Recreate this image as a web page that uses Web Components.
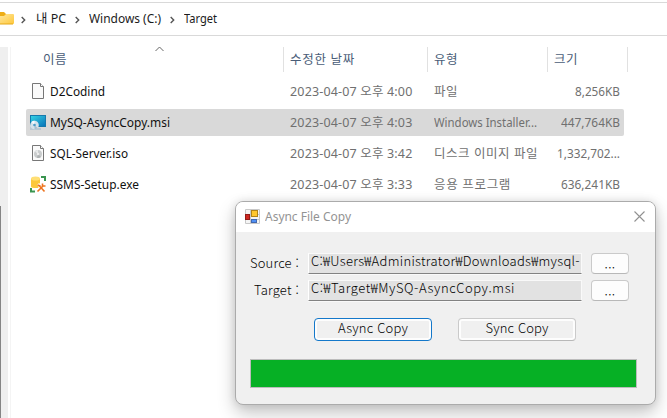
<!DOCTYPE html>
<html lang="ko"><head><meta charset="utf-8"><title>Target</title>
<style>html,body{margin:0;width:667px;height:418px;overflow:hidden;background:#fff}</style></head>
<body><file-explorer></file-explorer>
<script>
const define=(name,html,init)=>customElements.define(name,class extends HTMLElement{
 connectedCallback(){ if(this.shadowRoot)return; const r=this.attachShadow({mode:'open'}); r.innerHTML=typeof html==='function'?html(this):html; if(init)init(this,r);}
});
// A single line of text scaled horizontally to fill the width "w".
define('fit-text',el=>`<style>:host{display:block;white-space:pre;width:${el.getAttribute('w')}px;flex:none;line-height:18px;height:18px}span{display:inline-block;transform-origin:0 50%}</style><span></span>`,(el,r)=>{
 const s=r.querySelector('span'); s.textContent=el.getAttribute('text');
 const w=+el.getAttribute('w'),n=s.textContent.length,nat=s.getBoundingClientRect().width;
 if(w>nat) s.style.letterSpacing=((w-nat)/n)+'px';
 else s.style.transform=`scaleX(${w/nat})`;
});
define('file-icon',el=>{
 const page='<path d="M2.500 .5h8l3 3v12h-11z" fill="#fafafa" stroke="#777"/><path d="M10.500 .5v3h3" fill="#fff" stroke="#777"/>';
 const art={
 file:page,
 iso:page+'<circle cx="8" cy="9" r="4" fill="#c9cccd"/><path d="M8 9L5 6.500A4 4 0 0 1 8 5z" fill="#e8eaea"/><path d="M8 9l3 3a4 4 0 0 1-4 .8z" fill="#aeb2b3"/><circle cx="8" cy="9" r="1.200" fill="#eee"/>',
 msi:'<defs><linearGradient id="g" x2="1" y2="1"><stop stop-color="#35d5e5"/><stop offset="1" stop-color="#0871b8"/></linearGradient></defs><rect x=".5" y="1.500" width="15" height="11" fill="url(#g)" stroke="#1679ac"/><path d="M0 11v5h11v-2H8z" fill="#b9c8d2"/><circle cx="4.500" cy="11" r="4.300" fill="#d4e2eb"/><path d="M4.500 11L1.500 8a4.300 4.300 0 0 1 3-1.300z" fill="#f5faff"/><path d="M4.500 11l3 3a4.300 4.300 0 0 1-3 1.300z" fill="#a5bfd0"/><circle cx="4.500" cy="11" r="1.300" fill="#4c9cc5"/>',
 exe:'<path d="M11 1h4v4M1 12v3.500h4" fill="none" stroke="#3a9550" stroke-width="2"/><path d="M1 2.500v8c0 2 9 2 9 0v-8z" fill="#fcc83c"/><ellipse cx="5.500" cy="2.500" rx="4.500" ry="2" fill="#ffdf75"/><path d="M7 15l7-7M8 8l7 7" stroke="#fff" stroke-width="3"/><path d="M7.500 15.500l6-6M9 9.500l5.500 6M7.500 9l3 1M12.500 7.500v2.500h3" fill="none" stroke="#ed741f" stroke-width="1.600"/>'};
 return `<style>:host{display:block;width:16px;height:17px;flex:none}svg{display:block}</style><svg width="16" height="17" viewBox="0 0 16 17">${art[el.getAttribute('kind')]}</svg>`});
define('crumb-arrow','<style>:host{display:block;width:5px;height:8px;flex:none}svg{display:block}</style><svg width="5" height="8"><path d="M.7 1l3 3-3 3" fill="none" stroke="#555" stroke-width="1.400"/></svg>');
define('path-bar',`<style>:host{box-sizing:border-box;display:flex;align-items:center;height:34px;margin-top:2px;border-top:1px solid #d9d9d9;border-bottom:1px solid #d9d9d9;color:#1b1b1b}
 svg{display:block;flex:none;width:14px;margin-right:7px;margin-top:-3px}crumb-arrow{margin-top:1px}fit-text{margin:0 9px 0 10px}</style>
 <svg width="14" height="14"><defs><linearGradient id="f" x2="1" y2="1"><stop stop-color="#ffe69b"/><stop offset="1" stop-color="#fec83c"/></linearGradient></defs><path d="M0 1h4l2 2h7v4H0z" fill="#eead16"/><path d="M0 5h4l2-2h7q1 0 1 1v8q0 1-1 1H0z" fill="url(#f)"/><path d="M0 13h13" stroke="#e6a817"/></svg>
 <crumb-arrow></crumb-arrow><fit-text text="내 PC" w="30"></fit-text><crumb-arrow></crumb-arrow><fit-text text="Windows (C:)" w="72" style="margin-left:9px"></fit-text><crumb-arrow></crumb-arrow><fit-text text="Target" w="33" style="margin-left:9px"></fit-text>`);
define('column-heads',`<style>:host{display:grid;grid-template-columns:258px 144px 120px 80px;height:25px;color:#4a5d78}
 div{box-sizing:border-box;border-right:1px solid #e1e1e1;padding:4px 0 0 6px;position:relative}div:first-of-type{padding-left:17px}svg{position:absolute;left:129px;top:-1px}</style>
 <div><fit-text text="이름" w="24"></fit-text><svg width="9" height="6"><path d="M.5 5l4-4 4 4" fill="none" stroke="#666"/></svg></div><div><fit-text text="수정한 날짜" w="65"></fit-text></div><div><fit-text text="유형" w="24"></fit-text></div><div><fit-text text="크기" w="24"></fit-text></div>`);
define('file-row',el=>{const a=k=>el.getAttribute(k);return `<style>:host{box-sizing:border-box;display:grid;grid-template-columns:24px 240px 144px 1fr auto;align-items:center;width:598px;height:27px;padding:0 4px;margin-bottom:4px;border-radius:2px;color:#707070}
 :host([selected]){background:#d9d9d9}.n{color:#111}.s{justify-self:end}fit-text{margin-left:-4px}.s{margin-left:0}</style>
 <file-icon kind="${a('kind')}"></file-icon><fit-text class="n" text="${a('name')}" w="${a('nw')}"></fit-text><fit-text text="${a('date')}" w="122.500"></fit-text><fit-text text="${a('type')}" w="${a('tw')}"></fit-text><fit-text class="s" text="${a('size')}" w="${a('sw')}"></fit-text>`});
define('path-field',el=>`<style>:host{box-sizing:border-box;display:block;width:274px;height:21px;background:#e2e2e2;border:1px solid #f9f9f9;border-left-color:#fff;border-bottom:1px solid #828282;box-shadow:0 1px #f9f9f9;padding-left:2px}fit-text{margin-top:-2px}</style><fit-text text="${el.getAttribute('text')}" w="${el.getAttribute('w')}"></fit-text>`);
define('push-button',`<style>:host{box-sizing:border-box;display:flex;justify-content:center;align-items:center;border:1px solid #cacaca;border-bottom-color:#b8b8b8;border-radius:4px;background:#f0f0f0;box-shadow:inset 0 0 0 2px #fdfdfd;color:#000}:host([primary]){border-color:#1478ca}:host([browse]){background:#fdfdfd;width:38px;height:21px}</style><slot></slot>`);
define('copy-dialog',`<style>:host{box-sizing:border-box;position:absolute;left:235px;top:201px;width:421px;height:204px;border:1px solid #ababab;border-radius:8px;background:#f0f0f0;overflow:hidden;box-shadow:0 8px 18px rgba(0,0,0,.23),0 0 9px rgba(0,0,0,.1)}
 header{height:30px;background:#fff;display:flex;align-items:center;color:#939393;padding:0 10px 0 9px}header fit-text{margin-left:5px;margin-top:-1px}header svg{flex:none;margin-top:-1px}.x{margin-left:auto}
 main{font-family:"Noto Sans CJK KR",sans-serif;font-weight:300;color:#000;font-size:13px}
 .fields{display:grid;grid-template-columns:49px 274px 38px;grid-auto-rows:21px;column-gap:9px;row-gap:6px;padding:21px 0 0 14px}.fields>fit-text{justify-self:end;margin-top:1px}
 .actions{display:flex;gap:26px;margin:17px 0 0 78px}.actions push-button{width:118px;height:23px}.actions fit-text{margin-top:-3px}
 .progress{box-sizing:border-box;width:387px;height:29px;margin:18px 0 0 14px;background:#06b025;border:1px solid #bcbcbc}</style>
 <header><svg width="15" height="15"><path d="M.5 .5h14v14H.5zM5.500 .5v14M.5 5.500h14M.5 10.500h14" fill="#f5f5f5" stroke="#c8c8c8"/><rect x=".5" y="5.500" width="4" height="5" fill="#cf271f" stroke="#941c18"/><rect x="6.500" y="1.500" width="6" height="6" fill="#ffc72d" stroke="#b18417"/><rect x="6.500" y="10.500" width="5" height="3" fill="#4f8ff5" stroke="#4268ae"/></svg><fit-text text="Async File Copy" w="86"></fit-text><svg class="x" width="11" height="11"><path d="M.5 .5l10 10M10.500 .5l-10 10" stroke="#919191" stroke-width="1.100"/></svg></header>
 <main><div class="fields"><fit-text text="Source :" w="49"></fit-text><path-field text="C:₩Users₩Administrator₩Downloads₩mysql-" w="269"></path-field><push-button browse><fit-text text="..." w="11"></fit-text></push-button><fit-text text="Target :" w="45"></fit-text><path-field text="C:₩Target₩MySQ-AsyncCopy.msi" w="204"></path-field><push-button browse><fit-text text="..." w="11"></fit-text></push-button></div>
 <div class="actions"><push-button primary><fit-text text="Async Copy" w="70"></fit-text></push-button><push-button><fit-text text="Sync Copy" w="63"></fit-text></push-button></div><div class="progress"></div></main>`);
define('file-explorer',`<style>:host{display:block;position:relative;width:667px;height:418px;overflow:hidden;background:#fff;font:12.500px "Noto Sans","Noto Sans CJK KR",sans-serif}
 .body{display:grid;grid-template-columns:8px 1fr;margin-top:11px;height:371px}.rail{background:#efefef}.rail i{display:block;width:1px;margin-top:159px;height:212px;background:#858585}.content{box-sizing:border-box;margin-left:2px;border-left:1px solid #f4f4f4;min-width:0}column-heads{margin-left:15px}.rows{margin:6px 0 0 15px}</style>
 <path-bar></path-bar><div class="body"><div class="rail"><i></i></div><div class="content"><column-heads></column-heads><div class="rows">
 <file-row kind="file" name="D2Codind" nw="55" date="2023-04-07 오후 4:00" type="파일" tw="24" size="8,256KB" sw="45"></file-row>
 <file-row selected kind="msi" name="MySQ-AsyncCopy.msi" nw="120" date="2023-04-07 오후 4:03" type="Windows Installer..." tw="103" size="447,764KB" sw="59"></file-row>
 <file-row kind="iso" name="SQL-Server.iso" nw="78" date="2023-04-07 오후 3:42" type="디스크 이미지 파일" tw="104" size="1,332,702..." sw="63"></file-row>
 <file-row kind="exe" name="SSMS-Setup.exe" nw="89" date="2023-04-07 오후 3:33" type="응용 프로그램" tw="77" size="636,241KB" sw="59"></file-row></div></div></div><copy-dialog></copy-dialog>`);
</script></body></html>
